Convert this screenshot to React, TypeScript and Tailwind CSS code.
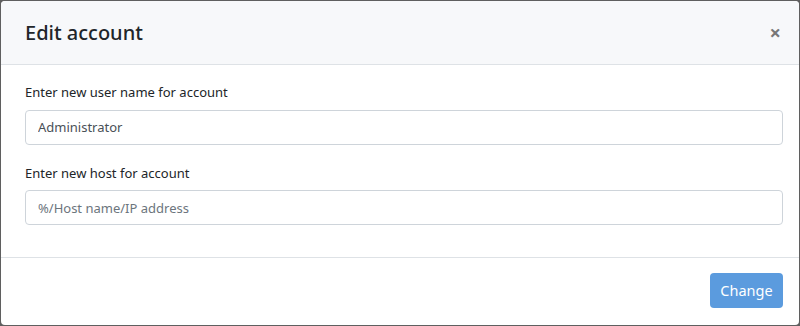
export default function App() {
  return (
    <div className="h-[326px] w-[800px] bg-[#5f5f5f] p-px" style={{ fontFamily: '"Noto Sans", "Open Sans", sans-serif' }}>
      <div className="flex h-[324px] w-[798px] flex-col overflow-hidden rounded-[4px] bg-white">
        {/* Header */}
        <div className="flex h-[64px] shrink-0 items-center justify-between border-b border-[#dee2e6] bg-[#f7f8fa] pl-[24px] pr-[18px]">
          <h2 className="pt-px text-[20px] font-medium text-[#212529]">Edit account</h2>
          <button className="text-[20px] font-bold leading-none text-[#777]">×</button>
        </div>

        {/* Body */}
        <div className="flex flex-1 flex-col pl-[24px] pr-[16px] pt-[18px]">
          <label className="text-[13px] text-[#212529]">Enter new user name for account</label>
          <input
            defaultValue="Administrator"
            className="mt-[7px] h-[35px] w-full rounded-[4px] border border-[#ced4da] px-[12px] text-[13px] text-[#495057] outline-none"
          />
          <label className="mt-[19px] text-[13px] text-[#212529]">Enter new host for account</label>
          <input
            placeholder="%/Host name/IP address"
            className="mt-[7px] h-[35px] w-full rounded-[4px] border border-[#ced4da] px-[12px] text-[13px] text-[#495057] outline-none placeholder:text-[#6c757d]"
          />
        </div>

        {/* Footer */}
        <div className="flex h-[68px] shrink-0 items-center justify-end border-t border-[#dee2e6] pb-[2px] pr-[16px]">
          <button className="h-[35px] w-[73px] rounded-[4px] bg-[#5b9bde] text-[14.5px] text-white">Change</button>
        </div>
      </div>
    </div>
  );
}
